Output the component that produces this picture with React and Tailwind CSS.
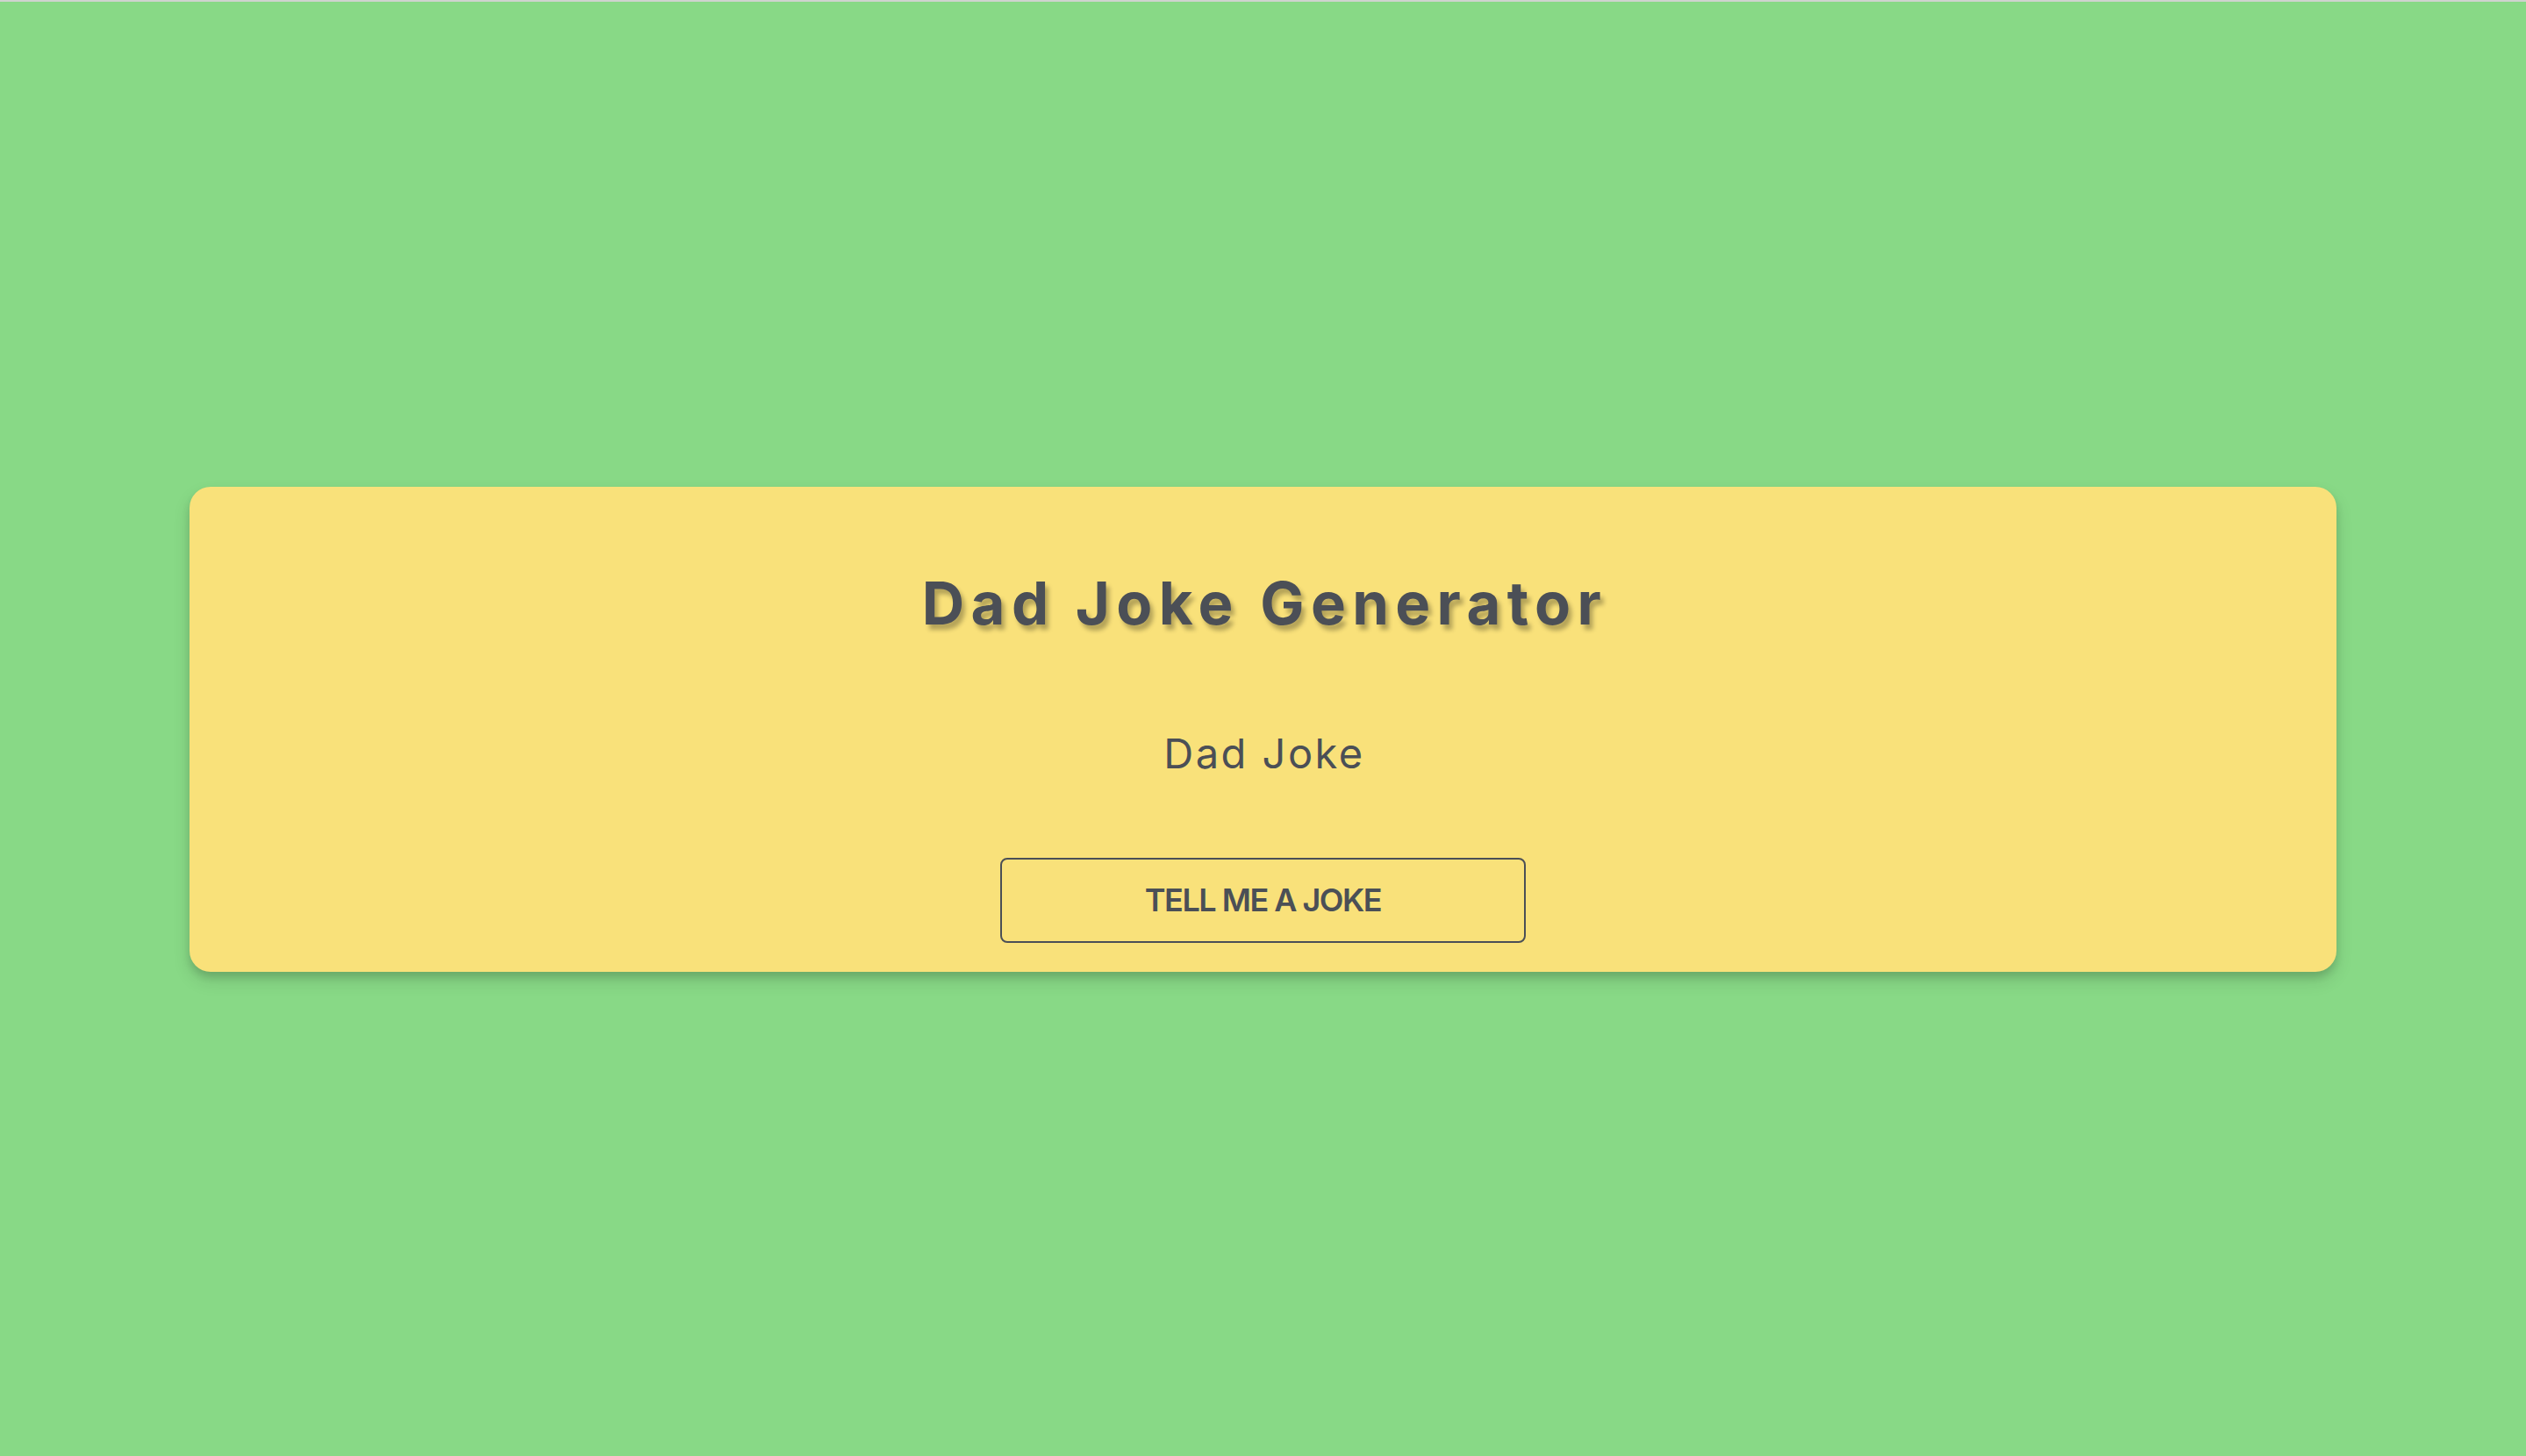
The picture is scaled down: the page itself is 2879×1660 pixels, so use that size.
export default function App() {
  return (
    <div className="h-screen w-full overflow-hidden bg-[#88d986] border-t-2 border-[#cfd3cf] flex items-center justify-center font-['Inter',sans-serif] text-[#4b4f56]">
      <div className="w-[2447px] bg-[#f9e17a] rounded-[24px] shadow-[0_10px_20px_rgba(0,0,0,0.12),0_6px_8px_rgba(0,0,0,0.12)] pt-[99px] pb-[33px] flex flex-col items-center">
        <h1 className="pl-[4px] text-[67px] leading-none font-bold tracking-[7.4px] [text-shadow:4px_6px_5px_rgba(0,0,0,0.28)]">
          Dad Joke Generator
        </h1>
        <div className="mt-[114px] pl-[3px] text-[47px] leading-none font-normal tracking-[2.5px]">Dad Joke</div>
        <button className="mt-[96px] w-[599px] h-[97px] border-2 border-[#4b4f56] rounded-[8px] flex items-center justify-center text-[36px] leading-none font-semibold uppercase tracking-[-1.5px]">
          Tell me a joke
        </button>
      </div>
    </div>
  );
}
